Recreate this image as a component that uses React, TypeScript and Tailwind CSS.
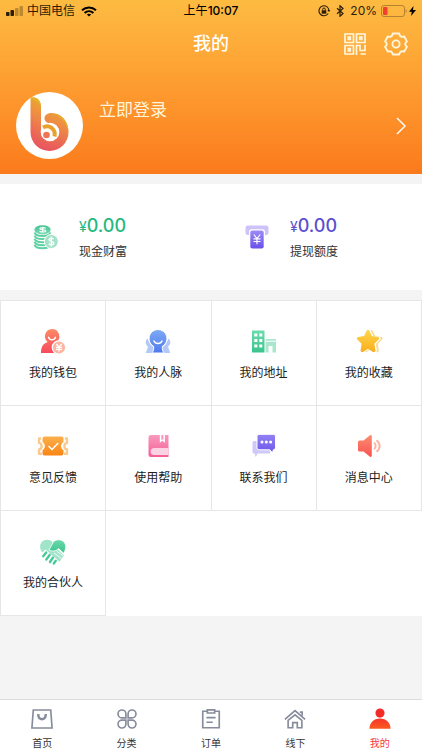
import type { ReactNode } from 'react';

function Gradient({ id, from, to }: { id: string; from: string; to: string }) {
  return (
    <defs>
      <linearGradient id={id} x1="0" y1="0" x2="0" y2="1">
        <stop offset="0" stopColor={from} />
        <stop offset="1" stopColor={to} />
      </linearGradient>
    </defs>
  );
}

function Icon({ children, className = 'size-6' }: { children: ReactNode; className?: string }) {
  return (
    <svg viewBox="0 0 24 24" fill="none" aria-hidden="true" className={`shrink-0 overflow-visible ${className}`}>
      {children}
    </svg>
  );
}

function CashIcon() {
  return (
    <Icon>
      <Gradient id="cash" from="#3cc48f" to="#7fdab4" />
      <ellipse cx="8.500" cy="4.800" rx="8.200" ry="4.600" fill="url(#cash)" />
      <path d="M.6 7.500c1 4.600 14.800 4.600 15.800 0M.6 10.600c1 4.600 14.800 4.600 15.800 0M.6 13.700c1 4.600 14.800 4.600 15.800 0M.6 16.800c1 4.600 14.800 4.600 15.800 0M.6 19.800c1 4.600 14.800 4.600 15.800 0" stroke="#5fd0a3" strokeWidth="2" />
      <path d="M11.800 3.300c-1.500-1-6-.9-6 .4 0 1.500 6 .6 6 2.200 0 1.300-4.500 1.400-6.300.3M8.700 1.800v5.800" stroke="#fff" strokeWidth="1.100" />
      <circle cx="17.300" cy="16.500" r="7" fill="#a3e2c9" stroke="#fff" strokeWidth="1" />
      <path d="M19.600 14c-1.200-1.300-4.600-1-4.600.8 0 2.100 4.800 1.100 4.800 3.300 0 2-3.700 2.200-5 .7M17.300 11.800v9.600" stroke="#fff" strokeWidth="1.400" />
    </Icon>
  );
}

function WithdrawIcon() {
  return (
    <Icon>
      <Gradient id="withdraw" from="#9c8bf7" to="#6a50ea" />
      <rect x=".5" y=".5" width="23" height="9.500" rx="2.500" fill="#cdc3fa" />
      <rect x="4" y="4.300" width="16" height="20" rx="2.500" fill="#fff" />
      <rect x="5.300" y="5.500" width="13.400" height="18" rx="2" fill="url(#withdraw)" />
      <path d="m8.800 9.500 3.200 4 3.200-4M8.500 13.800h7M8.500 16.500h7M12 13.500v5.800" stroke="#fff" strokeWidth="1.200" />
    </Icon>
  );
}

function WalletIcon() {
  return (
    <Icon>
      <Gradient id="wallet" from="#fb8c66" to="#f9495d" />
      <path d="M11 0a7.300 7.300 0 0 1 4 13.400c3 1.200 5 3.500 5 6.600v4H0c0-6 2-9.500 6.700-11A7.300 7.300 0 0 1 11 0z" fill="url(#wallet)" />
      <path d="M7.500 8.300c1 3.400 6 3.400 7 0" stroke="#fff" strokeWidth="1.400" strokeLinecap="round" />
      <circle cx="18" cy="18.500" r="6.700" fill="#fbb6a3" stroke="#fff" strokeWidth="1.200" />
      <path d="m15.300 15 2.700 3 2.700-3M15 18.300h6M15 20.400h6M18 18v4.500" stroke="#fff" strokeWidth="1.200" />
    </Icon>
  );
}

function NetworkIcon() {
  return (
    <Icon>
      <Gradient id="network" from="#7eaaf6" to="#4f78ee" />
      <path d="M1.500 9.500C-1.200 12-.8 15.500 2 17.700L-.2 24h7l1.300-5.500c-3-1.500-5-4.500-6.600-9zM22.500 9.500c2.700 2.500 2.300 6-.5 8.200l2.200 6.300h-7l-1.300-5.500c3-1.500 5-4.500 6.600-9z" fill="#b1c8f9" />
      <path d="M12 .5a9 9 0 0 1 4.300 16.900c-.2 2.600.3 4.600 1.700 6.600H6c1.400-2 1.900-4 1.700-6.600A9 9 0 0 1 12 .5z" fill="url(#network)" stroke="#fff" strokeWidth="1" />
      <path d="M8 12c1.300 3.300 6.700 3.300 8 0" stroke="#fff" strokeWidth="1.500" strokeLinecap="round" />
    </Icon>
  );
}

function AddressIcon() {
  return (
    <Icon>
      <Gradient id="address" from="#6bdcae" to="#3ac38c" />
      <path d="M13.500 10H24v13.500h-3.500V17h-4v6.500h-3z" fill="#a9e6ce" />
      <path d="M13.500 12.200H24" stroke="#fff" strokeWidth="1" />
      <path d="M0 1.500h12.500v22H0z" fill="url(#address)" />
      <path d="M2.300 4.500h3v3h-3zm5 0h3v3h-3zm-5 5.500h3v3h-3zm5 0h3v3h-3zm-5 5.500h3v3h-3zm5 0h3v3h-3z" fill="#fff" />
    </Icon>
  );
}

function StarIcon() {
  const star =
    'M9.600 1.700c.6-1.200 2.200-1.200 2.800 0l2.500 5.400 5.800.8c1.400.2 1.900 1.700.9 2.700l-4.200 4.200 1 6.400c.2 1.400-1.200 2.300-2.400 1.700L11 19.800l-5 3.100c-1.200.6-2.600-.3-2.400-1.700l1-6.400L.4 10.600c-1-1-.5-2.500.9-2.700l5.800-.8z';
  return (
    <Icon>
      <Gradient id="star" from="#fbd84b" to="#fbad1d" />
      <g transform="translate(3.400 .2)">
        <path d={star} fill="#fbd98d" />
      </g>
      <g transform="translate(1.500 .1)">
        <path d={star} fill="#fff" />
      </g>
      <path d={star} fill="url(#star)" />
    </Icon>
  );
}

function FeedbackIcon() {
  return (
    <Icon>
      <Gradient id="feedback" from="#fbb04c" to="#fa8514" />
      <path d="M0 4.500h-2v4.300c3.500.8 3.500 5.900 0 6.700v4.200h3M24 4.500h2v4.300c-3.500.8-3.500 5.900 0 6.700v4.200h-3" stroke="#fbc98d" strokeWidth="2.400" strokeLinejoin="round" />
      <path d="M3.500 2.500h17A2 2 0 0 1 22.500 4.500V8c-3.200 2-3.200 6.500 0 8.300v3.200a2 2 0 0 1-2 2h-17a2 2 0 0 1-2-2v-3.200c3.200-1.800 3.200-6.300 0-8.300V4.500a2 2 0 0 1 2-2z" fill="url(#feedback)" />
      <path d="m7.500 12 3.500 3.500 6.200-6.500" stroke="#fff" strokeWidth="1.500" />
    </Icon>
  );
}

function HelpIcon() {
  return (
    <Icon>
      <Gradient id="help" from="#f899bd" to="#f55f97" />
      <path d="M5 1h17.500v22H5a2.500 2.500 0 0 1-2.500-2.500v-17A2.500 2.500 0 0 1 5 1z" fill="url(#help)" />
      <path d="M22.500 14H8.200a3.500 3.500 0 0 0 0 7h14.300z" fill="#fcd3e2" />
      <path d="M13.800 1v7.800l2.600-2 2.500 2V1h-1.600v5l-.9-.8-1 .8V1z" fill="#fff" />
    </Icon>
  );
}

function ContactIcon() {
  return (
    <Icon>
      <Gradient id="contact" from="#9282f5" to="#6d57e8" />
      <path d="M2 7h14a2 2 0 0 1 2 2v10.500H5.500L3.500 23l-.7-3.500H2a1.500 1.500 0 0 1-1.500-1.500V8.500A1.500 1.500 0 0 1 2 7z" fill="#cfc8fb" />
      <path d="M7 .3h14.500a2 2 0 0 1 2 2v11.500a2 2 0 0 1-2 2h-.2L20.500 19l-2.700-3.200H7a2 2 0 0 1-2-2V2.300a2 2 0 0 1 2-2z" fill="url(#contact)" stroke="#fff" strokeWidth="1" />
      <circle cx="10" cy="8" r="1.500" fill="#fff" />
      <circle cx="14.300" cy="8" r="1.500" fill="#fff" />
      <circle cx="18.600" cy="8" r="1.500" fill="#fff" />
    </Icon>
  );
}

function MessageIcon() {
  return (
    <Icon>
      <Gradient id="message" from="#fb8d6f" to="#f85353" />
      <path d="M2.500 6.500h4L13 1.300c.8-.6 1.800-.1 1.800.9v19.600c0 1-1 1.500-1.800.9l-6.500-5.200h-4A1.500 1.500 0 0 1 1 16V8a1.500 1.500 0 0 1 1.500-1.500z" fill="url(#message)" />
      <path d="M17 8.800c2.200 1.700 2.200 4.700 0 6.400M19.500 6.200c4.200 3.200 4.200 8.400 0 11.600" stroke="#fbb5a3" strokeWidth="2" />
    </Icon>
  );
}

function PartnerIcon() {
  return (
    <Icon>
      <Gradient id="partner" from="#6bd8ab" to="#3cc48e" />
      <path d="M11.500 3C8.500-.2 3-.2.300 3.500c-2 3-1.500 6.500.9 10L4.500 10.500l14 12.200 4.500-6.500L13 7z" fill="#a0e4ca" />
      <path d="M12.300 3c3-3.300 8.700-3 11.300.8 1.900 3 1.300 7-1 10.400l-5.200-4.700c-2 2.700-6.500 3.300-9.400 1.500z" fill="url(#partner)" stroke="#fff" strokeWidth=".8" />
      <path d="m13 14 7.500 5.500M15.500 12l6.500 4.800" stroke="#fff" strokeWidth=".9" />
      <path d="m3.700 13.500 11.600 9.800" stroke="#fff" strokeWidth="4" />
      <path d="m5.200 13.500-3 3.800M8.700 16l-3.400 4.500M12 18.500l-3 4.500M14.800 21.800l-2 2.700" stroke="#46c996" strokeWidth="2.300" strokeLinecap="round" />
    </Icon>
  );
}

const menu = [
  { label: '我的钱包', icon: <WalletIcon /> },
  { label: '我的人脉', icon: <NetworkIcon /> },
  { label: '我的地址', icon: <AddressIcon /> },
  { label: '我的收藏', icon: <StarIcon /> },
  { label: '意见反馈', icon: <FeedbackIcon /> },
  { label: '使用帮助', icon: <HelpIcon /> },
  { label: '联系我们', icon: <ContactIcon /> },
  { label: '消息中心', icon: <MessageIcon /> },
  { label: '我的合伙人', icon: <PartnerIcon /> },
];

const balances = [
  { label: '现金财富', amount: '0.00', color: 'text-[#24b981]', icon: <CashIcon /> },
  { label: '提现额度', amount: '0.00', color: 'text-[#5b50cf]', icon: <WithdrawIcon /> },
];

const tabs = [
  {
    label: '首页',
    icon: (
      <>
        <path d="M2.500 2.200h19L23 21.800H1z" />
        <path d="M8 6.500v1.800a4 4 0 0 0 8 0V6.500" strokeWidth="2.600" />
      </>
    ),
  },
  {
    label: '分类',
    icon: (
      <path d="M10.800 10.800H6.500a4.300 4.300 0 1 1 4.300-4.300zM13.200 10.800V6.500a4.300 4.300 0 1 1 4.300 4.300zM10.800 13.200v4.300a4.300 4.300 0 1 1-4.300-4.300zM13.200 13.200h4.300a4.300 4.300 0 1 1-4.300 4.300z" />
    ),
  },
  {
    label: '订单',
    icon: (
      <path d="M7.500 3.500H3v18h18v-18h-4.500M8 2h8v3.500H8zM7 10.500h10M7 15.500h7" />
    ),
  },
  {
    label: '线下',
    icon: (
      <path d="M1 12.500 12 2.800l11 9.700M17.300 4.500h2.500v4M4.500 13.500v8h5V16h5v5.500h5v-8L12 7.500z" />
    ),
  },
];

function StatusBar() {
  return (
    <div className="grid h-[22px] grid-cols-3 items-center px-1.5 text-xs text-[#2b1f0a]">
      <div className="flex items-center gap-1">
        <svg viewBox="0 0 17 10" className="h-2.5 w-[17px]" fill="currentColor" aria-hidden="true">
          <rect y="6" width="3.500" height="4" rx=".8" />
          <rect x="4.500" y="4" width="3.500" height="6" rx=".8" />
          <rect x="9" y="2" width="3.500" height="8" rx=".8" opacity=".3" />
          <rect x="13.500" width="3.500" height="10" rx=".8" opacity=".3" />
        </svg>
        <span>中国电信</span>
        <svg viewBox="0 0 16 11" className="ml-0.5 h-[11px] w-4" fill="none" stroke="black" strokeWidth="2" aria-hidden="true">
          <path d="M1 4.200c4-3.700 10-3.700 14 0M3.600 7c2.600-2.400 6.200-2.400 8.800 0" />
          <path d="M8 10.500 5.800 8.600c1.300-1.100 3.100-1.100 4.400 0z" fill="black" stroke="none" />
        </svg>
      </div>
      <div className="text-center text-black">
        上午<span className="font-medium">10:07</span>
      </div>
      <div className="flex items-center justify-end">
        <svg viewBox="0 0 12 12" className="mr-1.5 size-3" fill="none" stroke="currentColor" aria-hidden="true">
          <path d="M10.200 8.500A5 5 0 1 1 11 6" strokeWidth="1.100" />
          <path d="m9.300 5 1.700 2 1.400-2z" fill="currentColor" stroke="none" />
          <path d="M4.700 5.500V4.300a1.300 1.300 0 0 1 2.600 0v1.200" />
          <rect x="3.700" y="5.300" width="4.600" height="3.400" fill="currentColor" stroke="none" />
        </svg>
        <svg viewBox="0 0 8 12" className="mr-1.5 h-3 w-2" fill="none" stroke="currentColor" strokeWidth="1.200" aria-hidden="true">
          <path d="m1 3.300 6 5.200L4 11.300V.7l3 2.800-6 5.200" />
        </svg>
        <span className="mr-1">20%</span>
        <svg viewBox="0 0 26 12" className="h-3 w-[26px]" fill="none" aria-hidden="true">
          <rect x=".5" y=".5" width="23" height="11" rx="2.500" stroke="#b58232" />
          <rect x="2" y="2" width="4.500" height="8" rx="1" fill="#f2402f" />
          <path d="M24.700 4v4c1.300-.6 1.300-3.400 0-4z" fill="#b58232" />
        </svg>
        <svg viewBox="0 0 7 10" className="ml-0.5 h-2.5 w-[7px]" fill="black" aria-hidden="true">
          <path d="M4.500 0 0 5.700h2.800L2 10l5-6H4z" />
        </svg>
      </div>
    </div>
  );
}

function Avatar() {
  return (
    <svg viewBox="0 0 67 67" className="size-[67px] shrink-0" aria-hidden="true">
      <defs>
        <linearGradient id="logo" x1="0.700" y1="0" x2="0.400" y2="1">
          <stop offset="0" stopColor="#e9b526" />
          <stop offset=".45" stopColor="#ee8c45" />
          <stop offset="1" stopColor="#e8515f" />
        </linearGradient>
      </defs>
      <circle cx="33.500" cy="33.500" r="33.500" fill="white" />
      <path
        d="M14.500 5.500c6.500-1 10.500 3 10.500 9V40a9 9 0 0 0 18 0c0-5-3.500-8-8-8.500-4-.3-6.800-2.500-6.500-5.500.3-3.500 3.500-5 7.500-5 9.500 0 16.500 8.500 16.500 19a19 19 0 0 1-38 0z"
        fill="url(#logo)"
      />
      <path d="M14.500 5.500c6.500-1 10.500 3 10.500 9-3-5-7-5-10.500-9zM38 22c9 1 14.500 9 14.500 18-3-9-6-14-14.500-18z" fill="#e3b91f" opacity=".6" />
      <path d="M16 22c1 10 0 19 7 26 6 7 17 7 24-1-5 12-25 14-31-2z" fill="#ee5f62" opacity=".35" />
      <circle cx="34" cy="40" r="9.300" fill="white" />
      <path d="M27 35.500c6-3.500 13 1.500 11.500 9" fill="none" stroke="#e8a12e" strokeWidth="4" />
      <circle cx="30.500" cy="43" r="3.300" fill="#ec7555" />
    </svg>
  );
}

export default function App() {
  return (
    <div className="flex min-h-screen flex-col bg-[#f4f4f4] font-[Inter,'Noto_Sans_CJK_SC',sans-serif] text-[#333]">
      <header className="bg-linear-to-b from-[#fdbb42] to-[#fb7a1b] text-white">
        <StatusBar />
        <div className="grid h-11 grid-cols-3 items-center px-3.5">
          <h1 className="col-start-2 text-center text-lg font-medium">我的</h1>
          <div className="flex items-center justify-end gap-[18px]">
            <button type="button" aria-label="二维码">
              <svg viewBox="0 0 22 22" className="size-[22px]" fill="none" stroke="#fff6dd" strokeWidth="1.700" aria-hidden="true">
                <path d="M1 1h8.500v8.500H1zM12.500 1H21v8.500h-8.500zM1 12.500h8.500V21H1z" />
                <path d="M4.200 4.200h2.100v2.100H4.200zM15.700 4.200h2.100v2.100h-2.100zM4.200 15.700h2.100v2.100H4.200zM12.500 22v-9.500H16v5h5v-5.800M16.500 21H22" />
              </svg>
            </button>
            <button type="button" aria-label="设置">
              <svg viewBox="0 0 24 24" className="size-6" fill="none" stroke="#fff6dd" strokeWidth="1.900" strokeLinejoin="round" aria-hidden="true">
                <path d="M8.800 1.500h6.400c.4 2.800 2.300 4 5 3l2.700 4.900c-2.300 1.800-2.300 3.600 0 5.400l-2.700 4.800c-2.700-1-4.600.2-5 2.900H8.800c-.4-2.700-2.300-3.900-5-2.900l-2.700-4.800c2.300-1.800 2.300-3.600 0-5.400l2.700-4.900c2.700 1 4.600-.2 5-3z" />
                <circle cx="12" cy="12" r="3.600" />
              </svg>
            </button>
          </div>
        </div>
        <a href="#login" className="flex items-center px-4 pt-[26px] pb-[15px]">
          <Avatar />
          <span className="ml-4 flex-1 self-start pt-1.5 text-[17px] leading-6 text-[#fff4dc]">立即登录</span>
          <svg viewBox="0 0 10 18" className="h-[18px] w-2.5" fill="none" stroke="white" strokeWidth="1.500" aria-hidden="true">
            <path d="m1 1 8 8-8 8" />
          </svg>
        </a>
      </header>

      <main className="flex-1">
        <section className="mt-2.5 grid grid-cols-2 bg-white py-[30px]">
          {balances.map((item) => (
            <div key={item.label} className="flex items-center gap-[21px] pl-[34px]">
              {item.icon}
              <div className="flex flex-col gap-1.5">
                <p className={`text-lg leading-6 font-medium ${item.color}`}>
                  <span className="text-sm font-normal">¥</span>
                  {item.amount}
                </p>
                <p className="text-xs">{item.label}</p>
              </div>
            </div>
          ))}
        </section>

        <nav className="mt-2.5 grid grid-cols-4 border-t border-l border-[#e6e6e6] bg-white">
          {menu.map((item) => (
            <a
              key={item.label}
              href="#menu"
              className="flex flex-col items-center gap-3 border-r border-b border-[#e6e6e6] pt-7 pb-6 text-xs text-[#222]"
            >
              {item.icon}
              <span>{item.label}</span>
            </a>
          ))}
        </nav>
      </main>

      <nav className="sticky bottom-0 grid grid-cols-5 border-t border-[#dcdcdc] bg-white pt-2">
        {tabs.map((tab) => (
          <a key={tab.label} href="#tab" className="flex flex-col items-center gap-1.5 text-[10px] leading-[14px]">
            <svg viewBox="0 0 24 24" className="size-[22px]" fill="none" stroke="#868c9b" strokeWidth="1.800" aria-hidden="true">
              {tab.icon}
            </svg>
            {tab.label}
          </a>
        ))}
        <a href="#me" aria-current="page" className="flex flex-col items-center gap-1.5 text-[10px] leading-[14px] text-[#f5383a]">
          <Icon className="size-[22px]">
            <Gradient id="me" from="#f6352a" to="#fb5a20" />
            <circle cx="12" cy="5.500" r="5" fill="#f32b27" />
            <path d="M.5 22.500c0-6 4.500-11 11.500-11s11.500 5 11.500 11z" fill="url(#me)" />
          </Icon>
          我的
        </a>
      </nav>
    </div>
  );
}
